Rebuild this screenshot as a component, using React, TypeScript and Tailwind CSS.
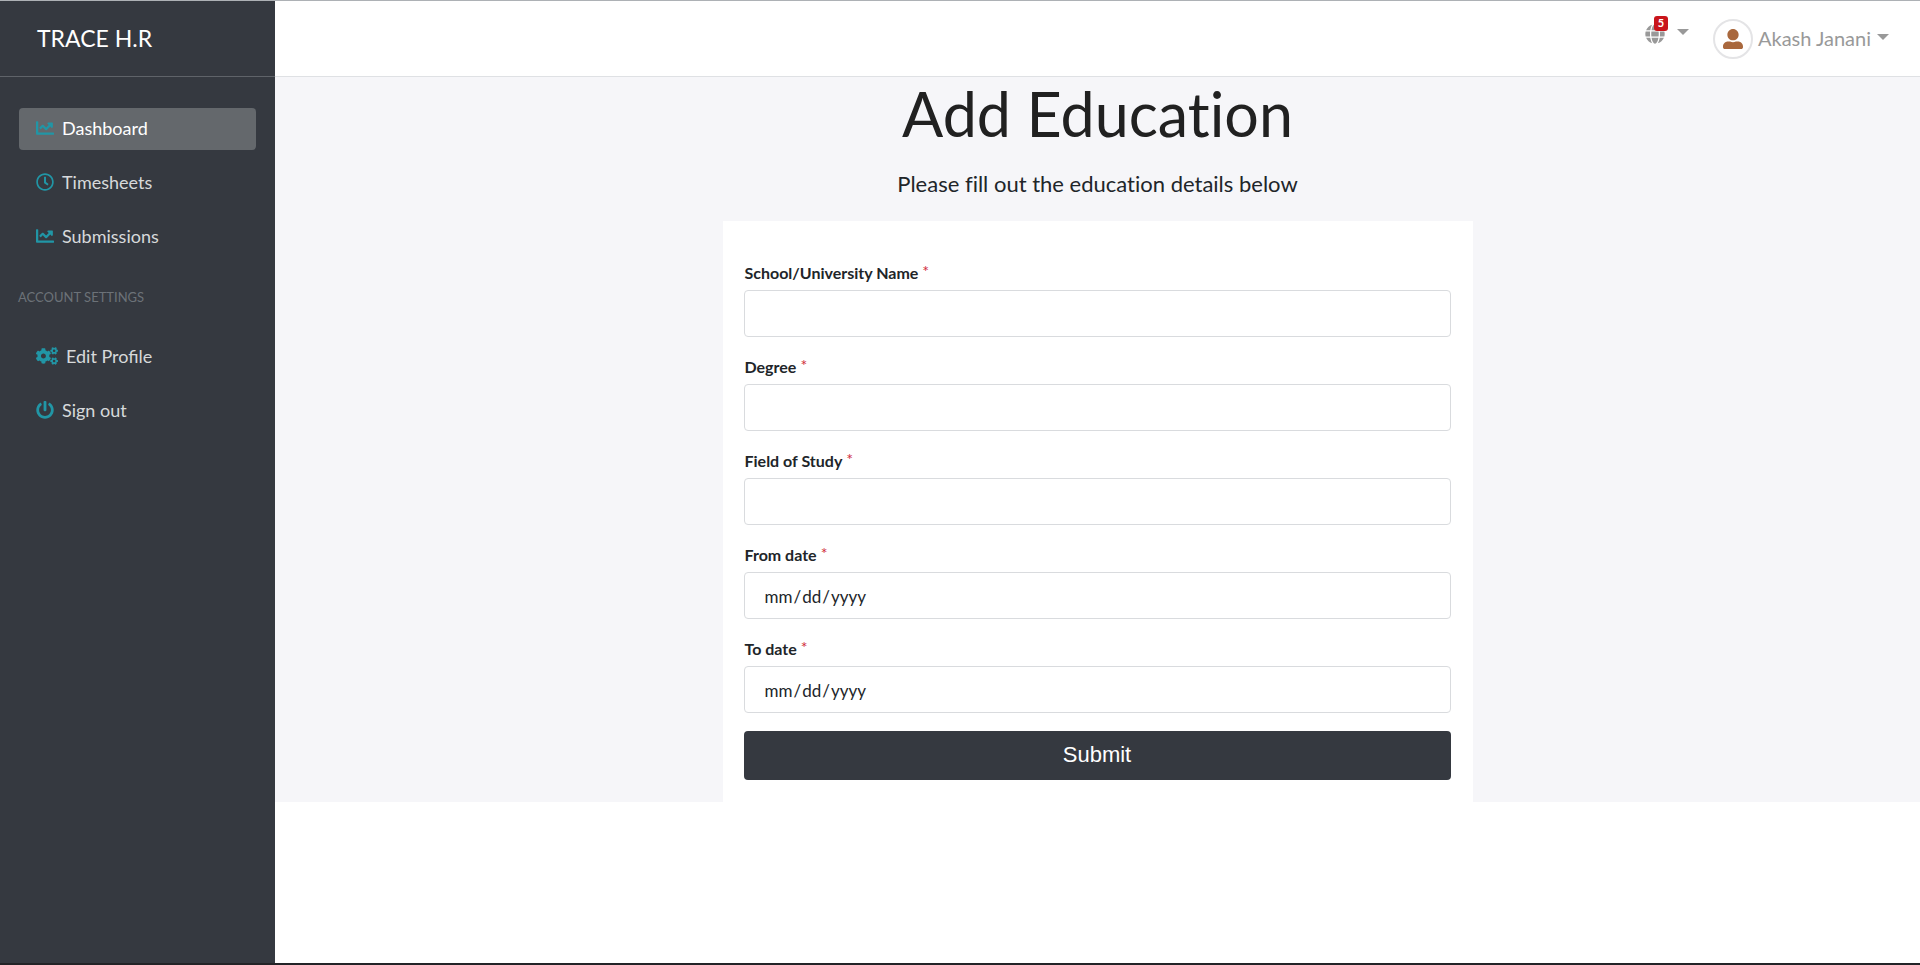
import React from "react";
import type { IconType } from "react-icons";
import { FaChartLine, FaRegClock, FaCogs, FaPowerOff, FaGlobe, FaUserAlt } from "react-icons/fa";

type NavItem = { label: string; icon: IconType; active?: boolean; wide?: boolean };

const mainNav: NavItem[] = [
  { label: "Dashboard", icon: FaChartLine, active: true },
  { label: "Timesheets", icon: FaRegClock },
  { label: "Submissions", icon: FaChartLine },
];

const accountNav: NavItem[] = [
  { label: "Edit Profile", icon: FaCogs, wide: true },
  { label: "Sign out", icon: FaPowerOff },
];

const fields = [
  { id: "school", label: "School/University Name", type: "text" },
  { id: "degree", label: "Degree", type: "text" },
  { id: "field", label: "Field of Study", type: "text" },
  { id: "from", label: "From date", type: "date" },
  { id: "to", label: "To date", type: "date" },
];

function NavList({ items }: { items: NavItem[] }) {
  return (
    <ul className="flex flex-col gap-3">
      {items.map(({ label, icon: Icon, active, wide }) => (
        <li key={label}>
          <a
            href="#"
            className={
              active
                ? "flex h-[42px] items-center gap-2 rounded bg-[#64686c] px-[17px] pb-0.5 text-lg text-white"
                : "flex h-[42px] items-center gap-2 rounded px-[17px] pb-0.5 text-lg text-[#d7d9db]"
            }
          >
            <Icon className={wide ? "h-[18px] w-[22px] text-[#2196a6]" : "size-[18px] text-[#2196a6]"} />
            {label}
          </a>
        </li>
      ))}
    </ul>
  );
}

function Caret() {
  return (
    <svg width="12" height="6" viewBox="0 0 12 6" fill="currentColor" aria-hidden="true">
      <path d="M0 0h12L6 6z" />
    </svg>
  );
}

export default function App() {
  return (
    <div className="flex min-h-screen border-t border-b-2 border-t-[#adb1b5] border-b-[#232327] bg-white font-['Lato',sans-serif] text-[#212529]">
      <aside className="w-[275px] shrink-0 bg-[#353940]">
        <div className="flex h-[76px] items-center border-b border-[#5f6369] pl-[37px]">
          <a href="#" className="text-[23px] text-white">
            TRACE H.R
          </a>
        </div>
        <nav className="px-[19px] pt-[31px]">
          <NavList items={mainNav} />
          <h2 className="-ml-px pt-[29px] pb-[29px] text-[13px] leading-5 text-[#6c7278]">ACCOUNT SETTINGS</h2>
          <NavList items={accountNav} />
        </nav>
      </aside>

      <div className="min-w-0 flex-1">
        <header className="flex h-[76px] items-center justify-end gap-6 border-b border-[#dfe1e4] pr-[31px] text-[#999]">
          <button type="button" aria-label="Notifications" className="flex items-center gap-3 pb-[9px]">
            <span className="relative">
              <FaGlobe className="size-5" />
              <span className="absolute -top-2 left-[9px] flex h-[15px] w-[14px] items-center justify-center rounded-[3px] bg-[#c9151b] text-[11px] font-bold text-white">
                5
              </span>
            </span>
            <span className="pb-1">
              <Caret />
            </span>
          </button>
          <button type="button" className="flex items-center gap-[5px] text-xl">
            <span className="flex size-10 items-center justify-center rounded-full border-2 border-[#e4e4e6]">
              <FaUserAlt className="size-5 text-[#a9683d]" />
            </span>
            <span className="flex items-center gap-1.5 pb-0.5">
              Akash Janani
              <span className="pb-0.5">
                <Caret />
              </span>
            </span>
          </button>
        </header>

        <main className="bg-[#f6f6f9]">
          <div className="text-center [font-variant-ligatures:none]">
            <h1 className="pt-px text-[61px] leading-[72px] text-[#212121]">Add Education</h1>
            <p className="pt-5 pb-[23px] text-[22px] leading-7">Please fill out the education details below</p>
          </div>
          <form
            onSubmit={(e) => e.preventDefault()}
            className="mx-auto max-w-[750px] bg-white pr-[22px] pl-[21px] pt-10 pb-[22px]"
          >
            <div className="flex flex-col gap-[18px] pb-[18px]">
              {fields.map((f) => (
                <div key={f.id}>
                  <label htmlFor={f.id} className="flex h-[29px] gap-1 pl-px text-base leading-6 font-bold">
                    {f.label}
                    <span className="text-base leading-5 font-normal text-[#d02c3a]">*</span>
                  </label>
                  <input
                    id={f.id}
                    type={f.type}
                    className="block h-[47px] w-full rounded border border-[#d9dbde] bg-white px-[19px] pt-0.5 text-[17px] outline-none [&::-webkit-calendar-picker-indicator]:hidden"
                  />
                </div>
              ))}
            </div>
            <button
              type="submit"
              className="block h-[49px] w-full rounded bg-[#353940] pb-0.5 font-['Liberation_Sans',sans-serif] text-[22px] text-white"
            >
              Submit
            </button>
          </form>
        </main>
      </div>
    </div>
  );
}
